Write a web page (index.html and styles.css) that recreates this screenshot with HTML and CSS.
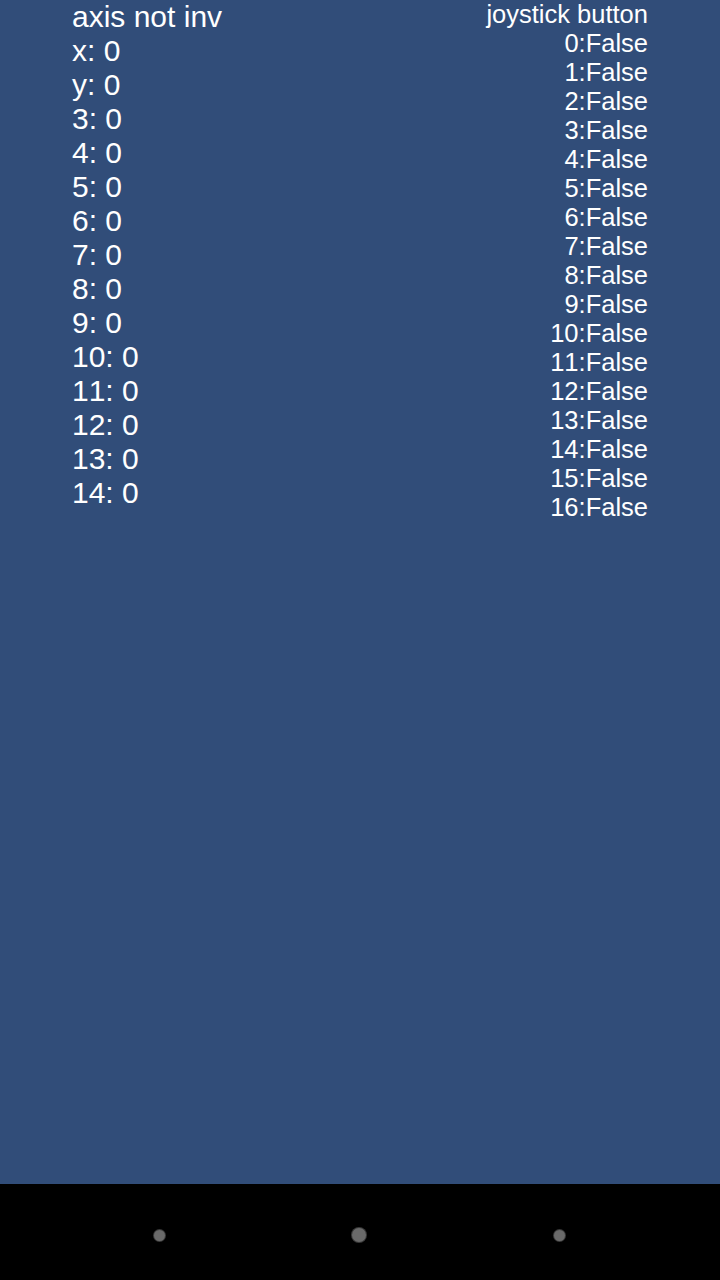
FILE: index.html
```html
<!DOCTYPE html>
<html lang="en">
<head>
    <meta charset="UTF-8">
    <meta name="viewport" content="width=device-width, initial-scale=1.0">
    <title>Joystick Test</title>
    <link rel="stylesheet" href="styles.css">
</head>
<body>
    <div class="screen">
        <div class="panels">
            <div class="axes">
                <div>axis not inv</div>
                <div>x: 0</div>
                <div>y: 0</div>
                <div>3: 0</div>
                <div>4: 0</div>
                <div>5: 0</div>
                <div>6: 0</div>
                <div>7: 0</div>
                <div>8: 0</div>
                <div>9: 0</div>
                <div>10: 0</div>
                <div>11: 0</div>
                <div>12: 0</div>
                <div>13: 0</div>
                <div>14: 0</div>
            </div>
            <div class="buttons">
                <div>joystick button</div>
                <div>0:False</div>
                <div>1:False</div>
                <div>2:False</div>
                <div>3:False</div>
                <div>4:False</div>
                <div>5:False</div>
                <div>6:False</div>
                <div>7:False</div>
                <div>8:False</div>
                <div>9:False</div>
                <div>10:False</div>
                <div>11:False</div>
                <div>12:False</div>
                <div>13:False</div>
                <div>14:False</div>
                <div>15:False</div>
                <div>16:False</div>
            </div>
        </div>
    </div>
    <div class="navbar">
        <span class="dot"></span>
        <span class="dot big"></span>
        <span class="dot"></span>
    </div>
</body>
</html>
```

FILE: styles.css
```css
body {
    margin: 0;
    width: 720px;
    height: 1280px;
    display: flex;
    flex-direction: column;
    font-family: "Liberation Sans", Arial, sans-serif;
    font-kerning: none;
    color: #ffffff;
    background-color: #000;
}
.screen {
    flex: 1;
    background-color: #314d79;
}
.panels {
    display: flex;
    justify-content: space-between;
    padding: 0 72px;
}
.axes {
    font-size: 30px;
    line-height: 34px;
}
.buttons {
    text-align: right;
    font-size: 25.5px;
    line-height: 29px;
}
.navbar {
    height: 96px;
    box-sizing: border-box;
    padding: 6px 0 0 59px;
    background-color: #000;
    display: grid;
    grid-template-columns: repeat(3, 200px);
    align-items: center;
    justify-items: center;
}
.dot {
    width: 11px;
    height: 11px;
    border-radius: 50%;
    background-color: #6a6a6a;
    box-shadow: 0 0 0 1px #3a3a3a;
}
.dot.big {
    width: 14px;
    height: 14px;
}
```
